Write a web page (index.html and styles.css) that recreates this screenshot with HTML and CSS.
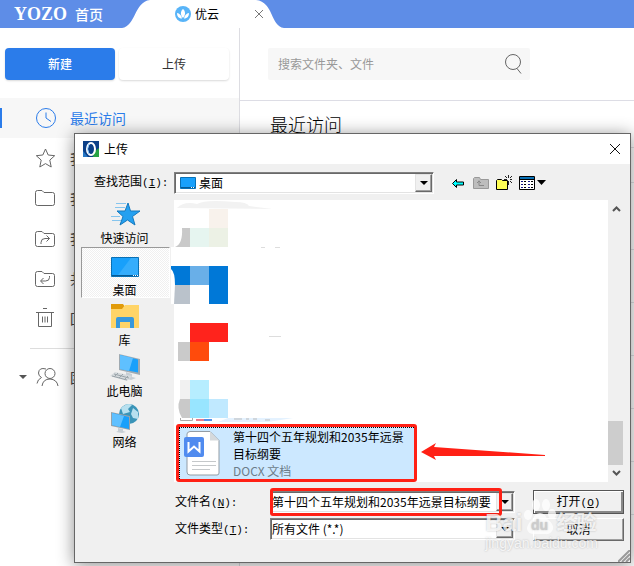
FILE: index.html
```html
<!DOCTYPE html>
<html lang="zh-CN">
<head>
    <meta charset="UTF-8">
    <meta name="viewport" content="width=device-width, initial-scale=1.0">
    <title>优云</title>
    <link rel="stylesheet" href="styles.css">
</head>
<body>
    <header class="tabbar">
        <a class="brand" href="#"><span class="brand-logo">YOZO</span><span>首页</span></a>
        <div class="tab">
            <svg width="16" height="16" viewBox="0 0 16 16"><circle cx="8" cy="8" r="8" fill="#58b4f8"/><path d="M8 12C5 9 5.500 5 8 3c2.500 2 3 6 0 9zM7 12.500C3.500 12.500 2 10 2 7c2.500.500 4.500 2 5 5.500zM9 12.500c3.500 0 5-2.500 5-5.500-2.500.500-4.500 2-5 5.500z" fill="#fff"/></svg>
            <span>优云</span>
            <button class="tab-close" aria-label="关闭标签"><svg width="10" height="10" viewBox="0 0 10 10"><path d="M1 1l8 8M9 1l-8 8" stroke="#777"/></svg></button>
        </div>
    </header>

    <div class="app">
        <aside class="sidebar">
            <div class="actions">
                <button class="btn btn-primary">新建</button>
                <button class="btn">上传</button>
            </div>
            <nav class="nav">
                <a class="nav-item active" href="#">
                    <svg viewBox="0 0 20 20"><circle cx="10" cy="10" r="9.500"/><path d="M10 4.500V10l5 3.500"/></svg>最近访问</a>
                <a class="nav-item" href="#">
                    <svg viewBox="0 0 20 20"><path d="M9.500 1l2.700 6 6.500.700-4.900 4.400 1.400 6.900-5.700-3.400L3.800 19l1.400-6.900L.300 7.700 6.800 7z"/></svg>我的收藏</a>
                <a class="nav-item" href="#">
                    <svg viewBox="0 0 20 20"><path d="M-.500 15.500v-11q0-2 2-2H6l2 2h8.500q2 0 2 2v9q0 2-2 2h-15q-2 0-2-2z"/></svg>我的文档</a>
                <a class="nav-item" href="#">
                    <svg viewBox="0 0 20 20"><path d="M-.500 16.500v-11q0-2 2-2H6l2 2h8.500q2 0 2 2v9q0 2-2 2h-15q-2 0-2-2z"/><path d="M5 16v-1.500q0-4 4-4h4.500M10.500 7.500l3 3-3 3"/></svg>我的分享</a>
                <a class="nav-item" href="#">
                    <svg viewBox="0 0 20 20"><path d="M-.500 16.500v-11q0-2 2-2H6l2 2h8.500q2 0 2 2v9q0 2-2 2h-15q-2 0-2-2z"/><path d="M13.500 8v1.500q0 3.500-4 3.500H5M7.500 10l-3 3 3 3"/></svg>共享给我</a>
                <a class="nav-item" href="#">
                    <svg viewBox="0 0 20 20"><path d="M0 4.500h18M7 .500h4M2.500 4.500v14h13v-14M6.500 8.500v6M9 8.500v6M11.500 8.500v6"/></svg>回收站</a>
                <hr class="nav-line">
                <a class="nav-item nav-team" href="#">
                    <svg viewBox="0 0 22 20"><circle cx="14" cy="6.500" r="5"/><path d="M6 19q1-7 8-7 7 .500 8 7M10 2q-7-2-7.500 4 0 3 3 4.500-4 2-4.500 6"/></svg>团队</a>
            </nav>
        </aside>

        <main class="main">
            <form class="search">
                <input type="search" placeholder="搜索文件夹、文件" aria-label="搜索文件夹、文件">
                <svg width="18" height="20" viewBox="0 0 18 20"><circle cx="8" cy="8" r="7.500" fill="none" stroke="#666"/><path d="M12 14.500l4 5" stroke="#666"/></svg>
            </form>
            <h1>最近访问</h1>
            <div class="recent">
                <div class="recent-head"></div>
                <div class="recent-row first"></div>
                <div class="recent-row"></div>
                <div class="recent-row"></div>
                <div class="recent-row"></div>
                <div class="recent-row"></div>
                <div class="recent-row"></div>
            </div>
        </main>
    </div>

    <section class="dialog" role="dialog" aria-labelledby="dlg-title">
        <div class="dialog-title">
            <svg width="16" height="16" viewBox="0 0 16 16"><path d="M0 0h16v16H0z" fill="#0b3f87"/><path d="M11 11l5-4v9h-6z" fill="#27a243"/><path d="M0 10l5 6H0z" fill="#2677c5"/><ellipse cx="8" cy="8" rx="4" ry="6" fill="none" stroke="#fff" stroke-width="2"/><path d="M6 3q-3 5 0 10" fill="none" stroke="#8bc9ff"/></svg>
            <h2 id="dlg-title">上传</h2>
            <button class="dialog-close" aria-label="关闭"><svg width="10" height="10" viewBox="0 0 10 10"><path d="M0 0l10 10M10 0L0 10" stroke="#111"/></svg></button>
        </div>

        <div class="lookin">
            <label for="lookin">查找范围<span class="key">(<u>I</u>):</span></label>
            <div class="combo">
                <svg width="16" height="12" viewBox="0 0 16 12"><path d="M.500.500h15v11H.500z" fill="#18a0fb" stroke="#0870b5"/><path d="M1 10.500h14" stroke="#065a94"/><path d="M11 10.500h4" stroke="#fff" stroke-dasharray="1 1"/></svg>
                <select id="lookin"><option>桌面</option></select>
                <span class="arrow"></span>
            </div>
            <div class="tools">
                <button aria-label="后退"><svg width="16" height="16" viewBox="0 0 16 16"><path d="M2.500 8.500l4-4v2.500h7v3h-7v2.500z" fill="#0ff" stroke="#000"/></svg></button>
                <button aria-label="向上一级" disabled><svg width="16" height="16" viewBox="0 0 16 16"><path d="M.500 13.500v-10l1-1h5l1 2h8v9z" fill="#bdbdbd" stroke="#999"/><path d="M6 5.500v5h5M4 8l2-2 2 2" fill="none" stroke="#888"/></svg></button>
                <button aria-label="新建文件夹"><svg width="16" height="16" viewBox="0 0 16 16"><path d="M.500 14.500v-9l1-1h4l1 1h5v9z" fill="#ff5" stroke="#000"/><path d="M12.500 0v3M12.500 6v4M8 4.500h3M14 4.500h2M9 1l2 2M14 6l2 2M16 1l-2 2" stroke="#222"/></svg></button>
                <button aria-label="查看"><svg width="27" height="16" viewBox="0 0 27 16"><path d="M.500 1.500h15v13H.500z" fill="#fff" stroke="#000"/><path d="M1 3h14" stroke="#0870b5" stroke-width="2"/><path d="M0 4.500h16" stroke="#000"/><path d="M2 6.500h2M9 6.500h2M2 9.500h2M9 9.500h2M2 12.500h2M9 12.500h2" stroke="#118"/><path d="M5 6.500h2M12 6.500h2M5 9.500h2M12 9.500h2M5 12.500h2M12 12.500h2" stroke="#000"/><path d="M18 5h9l-4.500 5z"/></svg></button>
            </div>
        </div>

        <div class="browse">
            <div class="places">
                <button class="place">
                    <svg viewBox="0 0 32 32"><path d="M19 5l2.500 8H31l-7.500 5.500L26 27l-7.500-5-7.500 5 3-8.500L8 13h8z" fill="#24a0f0" stroke="#1478bd"/><path d="M7 5.500h10M6 9.500h10M2 18.500h9M3 22.500h9" stroke="#86c5ee"/></svg>
                    快速访问</button>
                <button class="place selected">
                    <svg viewBox="0 0 32 32"><path d="M2.500 7.500h27v19h-27z" fill="#18a0fb" stroke="#0870b5"/><path d="M22 8h7v17H9z" fill="#35adfc"/><path d="M3 25.500h26" stroke="#065a94"/><path d="M24 25.500h5" stroke="#fff" stroke-dasharray="1 1"/></svg>
                    桌面</button>
                <button class="place">
                    <svg viewBox="0 0 32 32"><path d="M2 4h12l2 3v4H2z" fill="#e19b0a"/><path d="M2 9h11l3-4h14v23H2z" fill="#ffd467"/><path d="M7 28V19q0-2 2-2h14q2 0 2 2v9h-4v-6H11v6z" fill="#3898dc"/></svg>
                    库</button>
                <button class="place">
                    <svg viewBox="0 0 32 32"><path d="M10 3l21 5v16l-21-5z" fill="#9faab2"/><path d="M11 4l18 4.500v13L11 18z" fill="#18a0fb"/><path d="M11 4l13 3-4 13-9-2z" fill="#5fc0ff"/><path d="M17 21l6 2v3l4 1-5 2-7-2 2-1z" fill="#c6ced4"/><path d="M6 21l17 4-5 5L1 25z" fill="#d5dadd"/><path d="M5 23l15 4M3 25l15 4M9 22l-4 4M14 23l-4 4M19 25l-4 4" stroke="#9aa4aa"/></svg>
                    此电脑</button>
                <button class="place">
                    <svg viewBox="0 0 32 32"><circle cx="20" cy="12" r="10" fill="#3a94b8"/><path d="M12 6q7-6 11-3l-4 4 2 3-7 2zM24 6l5 4v7l-5-1-2-4z" fill="#b7e0ef"/><path d="M2 10l19 4v14L2 24z" fill="#96a2aa"/><path d="M3 11l17 4v12L3 23z" fill="#18a0fb"/><path d="M3 11l12 3-4 11-8-2z" fill="#5fc0ff"/><path d="M9 26l5 1v2l3 1-4 1-6-1 2-1z" fill="#c6ced4"/></svg>
                    网络</button>
            </div>

            <div class="file-pane">
                <ul class="files">
                    <li><svg class="thumb" viewBox="0 0 57 38">
                        <path d="M6-1q7-7 20-4 8-5 38-2 12 0 14 4l24 3z" fill="#f2f2f2"/>
                        <path d="M38 0h19v19H38z" fill="#f8f2ec"/>
                        <path d="M11 19h8v19H4q8-3 7-19z" fill="#c9c9c9"/>
                        <path d="M19 19h19v19H19z" fill="#e6f5f0"/>
                        <path d="M38 19h19v19H38z" fill="#ecf1e5"/>
                        <path d="M90 38.500h4M104 38.500h5" stroke="#ddd"/></svg></li>
                    <li><svg class="thumb" viewBox="0 0 57 38">
                        <path d="M0-19h4v57H0z" fill="#fff"/>
                        <path d="M0 0h19v19H4Q4 6 0 3z" fill="#0078d7"/>
                        <path d="M19 0h19v19H19z" fill="#69afe8"/>
                        <path d="M38 0h19v38H38z" fill="#0078d7"/>
                        <path d="M4 19h15v19H3z" fill="#bac2cb"/></svg></li>
                    <li><svg class="thumb" viewBox="0 0 57 38">
                        <path d="M19 0h38v19H19z" fill="#ff231c"/>
                        <path d="M7 19h12v19H7z" fill="#cacaca"/>
                        <path d="M19 19h19v19H19z" fill="#ff4b0c"/>
                        <path d="M98 13.500h12" stroke="#ddd"/></svg></li>
                    <li><svg class="thumb" viewBox="0 0 57 38">
                        <path d="M9 0h10v19H9z" fill="#f1f1f1"/>
                        <path d="M19 0h19v19H19z" fill="#b6edff"/>
                        <path d="M9 19h10v19h-8q-6-10-2-19z" fill="#c9c9c9"/>
                        <path d="M19 19h19v19H19z" fill="#98e5ff"/>
                        <path d="M38 19h19v19H38z" fill="#c0e9ff"/>
                        <path d="M9.500 38v2.500h12V38" fill="none" stroke="#aaa"/>
                        <path d="M25 40h8" stroke="#e87b8c" stroke-width="2"/>
                        <path d="M33 40h8" stroke="#5090ea" stroke-width="2"/>
                        <path d="M57 38h65l-25 4H47z" fill="#e4f2ff"/>
                        <path d="M63 39h8M75 39h3M82 39h4M94 40h5" stroke="#bbb"/></svg></li>
                    <li class="file-selected">
                        <div class="file">
                            <svg width="38" height="46" viewBox="0 0 38 46"><path d="M6 1.500h20l9 9V43q0 2-2 2H6q-3 0-3-3V4q0-2 3-2.500z" fill="#fff" stroke="#929ca5"/><path d="M26 1.500l9 9h-9z" fill="#d5d9dc"/><path d="M8 31.500h24M8 35.500h24M8 39.500h18" stroke="#c5c8ca"/><rect x="0" y="7" width="20" height="20" rx="2" fill="#508bef"/><path d="M4.500 12v9.500l5.500-5 5.500 5V12" fill="none" stroke="#fff" stroke-width="2"/></svg>
                            <p>第十四个五年规划和2035年远景目标纲要<span class="file-type">DOCX 文档</span></p>
                        </div>
                    </li>
                </ul>
                <div class="scrollbar">
                    <svg width="9" height="6" viewBox="0 0 9 6"><path d="M1 5l3.500-3.500L8 5" fill="none" stroke="#555" stroke-width="2"/></svg>
                    <span class="scroll-thumb"></span>
                    <svg width="9" height="6" viewBox="0 0 9 6"><path d="M1 1l3.500 3.500L8 1" fill="none" stroke="#555" stroke-width="2"/></svg>
                </div>
                <svg class="pointer" width="126" height="18" viewBox="0 0 126 18"><path d="M0 9L15 0l-2 4 111 8v1l-111 0 2 4z" fill="#ff2015"/></svg>
            </div>
        </div>

        <form class="fields">
            <label for="fname">文件名<span class="key">(<u>N</u>):</span></label>
            <div class="combo marked">
                <input id="fname" type="text" value="第十四个五年规划和2035年远景目标纲要">
                <span class="arrow"></span>
            </div>
            <button type="button" class="win-btn default">打开<span class="key">(<u>O</u>)</span></button>
            <label for="ftype">文件类型<span class="key">(<u>T</u>):</span></label>
            <div class="combo">
                <select id="ftype"><option>所有文件 (*.*)</option></select>
                <span class="arrow"></span>
            </div>
            <button type="button" class="win-btn">取消</button>
        </form>

        <svg class="grip" width="12" height="12" viewBox="0 0 12 12"><path d="M0 12L12 0M4 12l8-8M8 12l4-4" stroke="#999" stroke-width="2"/></svg>
        <div class="watermark">
            <div class="wm-logo"><span class="wm-latin">Bai</span><span class="paw"><svg width="34" height="36" viewBox="0 0 32 36"><ellipse cx="4" cy="16" rx="4" ry="5"/><ellipse cx="12" cy="6" rx="4" ry="6"/><ellipse cx="22" cy="6" rx="4" ry="6"/><ellipse cx="28" cy="15" rx="4" ry="5"/><path d="M16 14q5 0 7 6 7 5 6 10-2 6-8 5H10q-6 0-7-5 0-5 6-10 2-6 7-6z"/></svg><b>du</b></span>经验</div>
            <div>jingyan.baidu.com</div>
        </div>
    </section>
</body>
</html>
```

FILE: styles.css
```css
* {
    box-sizing: border-box;
}
body {
    margin: 0;
    min-height: 100vh;
    display: flex;
    flex-direction: column;
    position: relative;
    overflow: hidden;
    background: #fff;
    color: #000;
    font-family: "Noto Sans CJK SC", sans-serif;
    font-size: 12px;
    line-height: 16px;
}
button, input, select {
    font: inherit;
    color: inherit;
    border: 0;
    margin: 0;
    padding: 0;
    background: none;
}
a {
    color: inherit;
    text-decoration: none;
}
svg {
    flex: none;
}

/* tabs */
.tabbar {
    display: flex;
    height: 28px;
    background: #5e8de7;
}
.brand {
    display: flex;
    align-items: center;
    gap: 8px;
    width: 122px;
    padding-left: 14px;
    color: #fff;
    font-size: 14px;
    font-weight: 500;
}
.brand-logo {
    font-family: "Liberation Serif", serif;
    font-size: 18px;
    font-weight: bold;
}
.tab {
    display: flex;
    align-items: center;
    gap: 4px;
    width: 162px;
    padding: 0 20px 0 53px;
    background: #fff;
    clip-path: path("M0 28C14 26 12 2 28 0H134C152 2 148 26 162 28z");
}
.tab-close {
    display: flex;
    margin-left: auto;
}

/* page */
.app {
    display: flex;
    flex: 1;
}
.sidebar {
    flex: none;
    width: 240px;
    border-right: 1px solid #dddde2;
}
.actions {
    display: flex;
    gap: 4px;
    padding: 20px 10px 18px 5px;
}
.btn {
    flex: 1;
    height: 32px;
    border-radius: 4px;
    color: #333;
    box-shadow: 0 1px 2px rgba(0, 0, 0, 0.15);
}
.btn-primary {
    background: #2b7cea;
    color: #fff;
    font-weight: 500;
}
.nav-item {
    display: flex;
    align-items: center;
    gap: 14px;
    height: 40px;
    padding-left: 36px;
    position: relative;
    color: #444;
    font-size: 14px;
}
.nav-item svg {
    width: 20px;
    height: 20px;
    overflow: visible;
    fill: none;
    stroke: #666;
}
.nav-item.active {
    background: #f7f7f7;
    color: #2b7cea;
}
.nav-item.active svg {
    stroke: #2b7cea;
}
.nav-item.active::before {
    content: "";
    position: absolute;
    left: 0;
    top: 10px;
    width: 2px;
    height: 20px;
    background: #2b7cea;
}
.nav-line {
    margin: 10px 0 8px 30px;
    border: 0;
    border-top: 1px solid #ddd;
}
.nav-team {
    gap: 12px;
}
.nav-team svg {
    width: 22px;
}
.nav-team::before {
    content: "";
    position: absolute;
    left: 19px;
    top: 18px;
    border: 4px solid transparent;
    border-top-color: #555;
}
.main {
    flex: 1;
}
.search {
    display: flex;
    align-items: center;
    height: 32px;
    max-width: 262px;
    margin: 20px 28px;
    padding: 0 7px 0 10px;
    border-radius: 2px;
    background: #f7f7f7;
}
.search input {
    flex: 1;
    min-width: 0;
    outline: none;
}
.search input::placeholder {
    color: #999;
}
.main h1 {
    height: 47px;
    margin: 0;
    padding: 11px 30px;
    border-top: 1px solid #dddde5;
    font-size: 18px;
    line-height: 24px;
    font-weight: 300;
}
.recent-head {
    height: 36px;
    border: 1px solid #e2e2e6;
    border-width: 1px 0;
}
.recent-row {
    height: 53px;
    border-bottom: 1px solid #e2e2e6;
}
.recent-row.first {
    height: 67px;
}

/* file dialog */
.dialog {
    position: absolute;
    left: 74px;
    right: 3px;
    top: 133px;
    background: #f0f0f0;
    border: 1px solid #666;
    box-shadow: 0 2px 16px rgba(0, 0, 0, 0.45);
}
.dialog-title {
    display: flex;
    align-items: center;
    gap: 5px;
    height: 30px;
    padding: 0 10px 0 8px;
    background: #fff;
}
.dialog-title h2 {
    margin: 0;
    font-size: 12px;
    font-weight: normal;
}
.dialog-close {
    display: flex;
    margin-left: auto;
}
.key {
    font-family: "Liberation Mono", monospace;
    font-size: 11px;
}
.lookin {
    display: flex;
    padding: 8px 5px 0 19px;
}
.lookin label {
    width: 80px;
    padding-top: 1px;
}
.combo {
    display: flex;
    align-items: center;
    flex: 1;
    min-width: 0;
    height: 22px;
    padding: 0 1px;
    position: relative;
    background: #fff;
    border: 1px solid;
    border-color: #808080 #fff #fff #808080;
    box-shadow: inset 1px 1px #696969, inset -1px -1px #e3e3e3;
}
.combo select, .combo input {
    flex: 1;
    min-width: 0;
    appearance: none;
    outline: none;
}
.combo svg {
    margin: 0 3px 0 4px;
}
.arrow {
    display: flex;
    align-items: center;
    justify-content: center;
    flex: none;
    width: 17px;
    height: 18px;
    background: #f0f0f0;
    border: 1px solid;
    border-color: #e3e3e3 #696969 #696969 #e3e3e3;
    box-shadow: inset -1px -1px #a0a0a0;
    pointer-events: none;
}
.arrow::before {
    content: "";
    border: 4px solid transparent;
    border-top-color: #000;
    border-bottom: 0;
}
.tools {
    display: flex;
    align-items: center;
    gap: 7px;
    width: 191px;
    padding-left: 16px;
}
.tools button {
    display: flex;
}
.browse {
    display: flex;
    gap: 4px;
    padding: 2px 5px 0 6px;
}
.places {
    width: 89px;
}
.place {
    display: flex;
    flex-direction: column;
    align-items: center;
    width: 100%;
    height: 51px;
    padding: 2px 2px 0 0;
}
.place svg {
    width: 32px;
    height: 32px;
}
.place.selected {
    border: 1px solid;
    border-color: #999 #fff #fff #999;
    background: repeating-conic-gradient(#fff 0 25%, #f0f0f0 0 50%) 0 0 / 2px 2px;
}
.file-pane {
    display: flex;
    flex: 1;
    margin-top: 4px;
    position: relative;
    background: #fff;
}
.files {
    display: grid;
    grid-template-rows: 57px 57px 57px 44px 58px;
    flex: 1;
    margin: 0;
    padding: 9px 2px 0 0;
    list-style: none;
}
.thumb {
    display: block;
    width: 57px;
    height: 38px;
    margin-left: -3px;
    overflow: visible;
}
.file-selected {
    max-width: 241px;
    margin-left: 2px;
    border: 3px solid #ff2015;
    border-radius: 3px;
    background: #cce8ff;
}
.file {
    display: flex;
    gap: 11px;
    height: 100%;
    padding: 0 5px 0 4px;
    border: 1px dotted #000;
    border-width: 1px 0 0 1px;
}
.file svg {
    margin-top: 2px;
}
.file p {
    margin: 0;
    line-height: 17px;
}
.file-type {
    display: block;
    color: #6d7d8a;
}
.scrollbar {
    display: flex;
    flex-direction: column;
    align-items: center;
    width: 17px;
    padding: 6px 0;
    background: #f0f0f0;
}
.scroll-thumb {
    width: 15px;
    height: 44px;
    margin: auto 2px 5px 0;
    background: #cdcdcd;
}
.pointer {
    position: absolute;
    left: 247px;
    top: 243px;
}
.fields {
    display: grid;
    grid-template-columns: 95px 1fr 91px;
    grid-auto-rows: 24px;
    row-gap: 3px;
    align-items: center;
    padding: 8px 6px 21px 100px;
}
.fields .combo {
    margin-right: 18px;
}
.marked::after {
    content: "";
    position: absolute;
    inset: -4px 12px -4px -1px;
    border: 3px solid #ff2015;
    border-radius: 3px;
    pointer-events: none;
}
.win-btn {
    height: 23px;
    border: 1px solid;
    border-color: #fff #696969 #696969 #fff;
    box-shadow: inset -1px -1px #a0a0a0;
}
.win-btn.default {
    height: 24px;
    border-color: #555;
    box-shadow: inset 1px 1px #fff, inset -2px -2px #888;
}
.grip {
    position: absolute;
    right: 0;
    bottom: 0;
}
.watermark {
    position: absolute;
    right: 32px;
    bottom: 11px;
    color: rgba(255, 255, 255, 0.8);
    font-family: "Liberation Sans", "Noto Sans CJK SC", sans-serif;
    font-size: 14px;
    line-height: 16px;
    text-shadow: 0 0 2px rgba(0, 0, 0, 0.25);
    pointer-events: none;
}
.wm-logo {
    display: flex;
    align-items: flex-end;
    font-size: 20px;
    line-height: 24px;
    font-weight: bold;
}
.wm-latin {
    font-size: 24px;
}
.paw {
    display: grid;
    place-items: end center;
    color: #ccc;
    font-size: 14px;
    line-height: 20px;
}
.paw svg, .paw b {
    grid-area: 1 / 1;
}
.paw svg {
    fill: rgba(255, 255, 255, 0.75);
}
```
